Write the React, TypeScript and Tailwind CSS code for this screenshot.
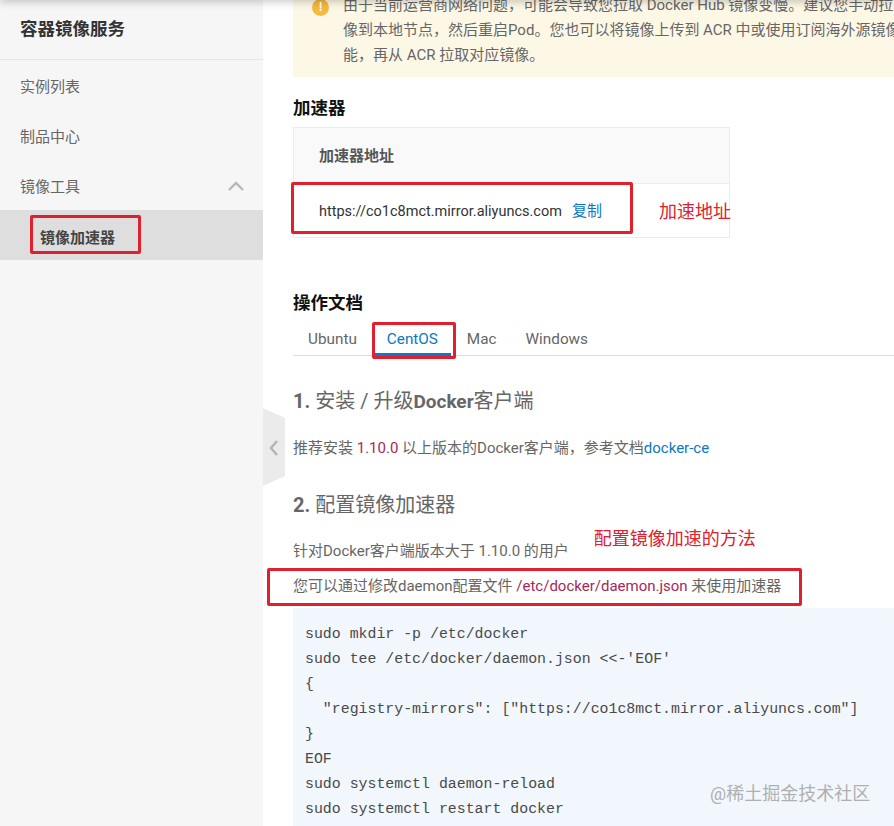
const font = "font-['Roboto','Noto_Sans_CJK_SC',sans-serif]";

function Box({ className }: { className: string }) {
  return <div className={`absolute border-[3px] border-[#e0202c] rounded-[2px] ${className}`} />;
}

const code = `sudo mkdir -p /etc/docker
sudo tee /etc/docker/daemon.json <<-'EOF'
{
  "registry-mirrors": ["https://co1c8mct.mirror.aliyuncs.com"]
}
EOF
sudo systemctl daemon-reload
sudo systemctl restart docker`;

function Sidebar() {
  return (
    <aside className="w-[263px] shrink-0 bg-[#f6f6f7] relative">
      <div className="h-[60px] pl-5 flex items-center border-b border-[#e6e6e6] text-[17.5px] font-bold text-[#333]">
        容器镜像服务
      </div>
      <div className="text-[15px] text-[#666]">
        <div className="h-[50px] pl-5 pt-[5px] flex items-center">实例列表</div>
        <div className="h-[50px] pl-5 pt-[5px] flex items-center">制品中心</div>
        <div className="h-[50px] pl-5 pr-[18px] pt-[5px] flex items-center justify-between">
          镜像工具
          <svg className="-mt-[3px]" width="18" height="12" viewBox="0 0 18 12" fill="none" stroke="#b8b8b8" strokeWidth="2.4">
            <path d="M2 10 L9 3 L16 10" />
          </svg>
        </div>
        <div className="h-[50px] pl-10 pt-[7px] flex items-center bg-[#dedede] font-bold text-[#444]">镜像加速器</div>
      </div>
      <Box className="left-[30px] top-[215px] w-[111px] h-[39px]" />
    </aside>
  );
}

function Main() {
  return (
    <main className="flex-1 min-w-0 pl-[30px] bg-white text-[15px] text-[#666] relative">
      <div className="h-[77px] bg-[#fdf8e6] overflow-hidden pl-[50px] -mr-px">
        <div className="-mt-[7px] leading-[25px] whitespace-nowrap text-[#666] relative">
          <span className="absolute -left-[31px] top-[6px] w-[17px] h-[17px] rounded-full bg-[#f5b93f] text-white text-[12px] font-bold flex items-center justify-center">!</span>
          <div>由于当前运营商网络问题，可能会导致您拉取 Docker Hub 镜像变慢。建议您手动拉取镜</div>
          <div>像到本地节点，然后重启Pod。您也可以将镜像上传到 ACR 中或使用订阅海外源镜像功</div>
          <div>能，再从 ACR 拉取对应镜像。</div>
        </div>
      </div>

      <h2 className="mt-[20px] text-[17.5px] font-bold leading-[22px] text-[#111]">加速器</h2>
      <div className="mt-[8px] w-[437px] border border-[#ececec]">
        <div className="h-[56px] bg-[#f9f9f9] border-b border-[#ececec] pl-[25px] pt-[2px] flex items-center font-bold text-[#555]">
          加速器地址
        </div>
        <div className="h-[53px] pl-[25px] pt-[2px] flex items-center text-[#333] whitespace-nowrap">
          <span className="text-[14.5px]">https://co1c8mct.mirror.aliyuncs.com</span>
          <span className="ml-[10px] text-[#0a78c2]">复制</span>
          <span className="ml-[57px] text-[18px] text-[#e0202c]">加速地址</span>
        </div>
      </div>

      <h2 className="mt-[54px] text-[17.5px] font-bold leading-[22px] text-[#111]">操作文档</h2>
      <div className="mt-[7px] h-[35px] flex items-start border-b border-[#dcdcdc] pl-[15px] text-[15.3px]">
        <div className="pt-[7px]">Ubuntu</div>
        <div className="ml-[16px] px-[14px] pt-[7px] h-[35px] text-[#0a78c2] border-b-[3px] border-[#0a78c2] w-[78px]">CentOS</div>
        <div className="ml-[16px] pt-[7px]">Mac</div>
        <div className="ml-[29px] pt-[7px]">Windows</div>
      </div>

      <h3 className="mt-[32px] text-[20px] leading-[26px] font-bold text-[#666]">
        1. <span className="font-normal">安装 / 升级</span><span className="text-[19px]">Docker</span><span className="font-normal">客户端</span>
      </h3>
      <p className="mt-[21px] leading-[24px]">
        推荐安装 <span className="text-[#a8275a]">1.10.0</span> 以上版本的Docker客户端，参考文档<span className="text-[#0a78c2]">docker-ce</span>
      </p>
      <h3 className="mt-[32px] text-[20px] leading-[26px] font-bold text-[#666]">
        2. <span className="font-normal">配置镜像加速器</span>
      </h3>
      <div className="mt-[8px] flex items-start">
        <p className="mt-[13px] leading-[24px]">针对Docker客户端版本大于 1.10.0 的用户</p>
        <span className="ml-[25px] mt-[1px] text-[18px] leading-[24px] text-[#e0202c]">配置镜像加速的方法</span>
      </div>
      <p className="mt-[11px] leading-[24px]">
        您可以通过修改daemon配置文件 <span className="text-[#a8275a]">/etc/docker/daemon.json</span> 来使用加速器
      </p>
      <pre className="mt-[10px] h-[300px] bg-[#f2f7fd] pl-[12px] pt-[14px] font-['Liberation_Mono',monospace] text-[14.88px] leading-[25px] text-[#4a4a4a]">
        {code}
      </pre>

      <div className="absolute left-[447px] top-[780px] text-[18px] text-[#b0b0b0]">@稀土掘金技术社区</div>
      <Box className="left-[28px] top-[182px] w-[342px] h-[52px]" />
      <Box className="left-[109px] top-[322px] w-[84px] h-[37px]" />
      <Box className="left-[4px] top-[568px] w-[535px] h-[38px]" />
    </main>
  );
}

export default function App() {
  return (
    <div className={`relative flex h-[826px] w-[894px] overflow-hidden ${font}`}>
      <Sidebar />
      <Main />
      <div className="absolute left-0 right-0 -top-[6px] h-[6px] shadow-[0_1px_8px_rgba(0,0,0,0.3)]" />
      <svg className="absolute left-[263px] top-[408px]" width="23" height="78" viewBox="0 0 23 78">
        <path d="M0 0 L22 10 L22 68 L0 78 Z" fill="#ebebeb" />
        <path d="M14 33 L8 40 L14 47" fill="none" stroke="#b5b5b5" strokeWidth="2.5" />
      </svg>
    </div>
  );
}
